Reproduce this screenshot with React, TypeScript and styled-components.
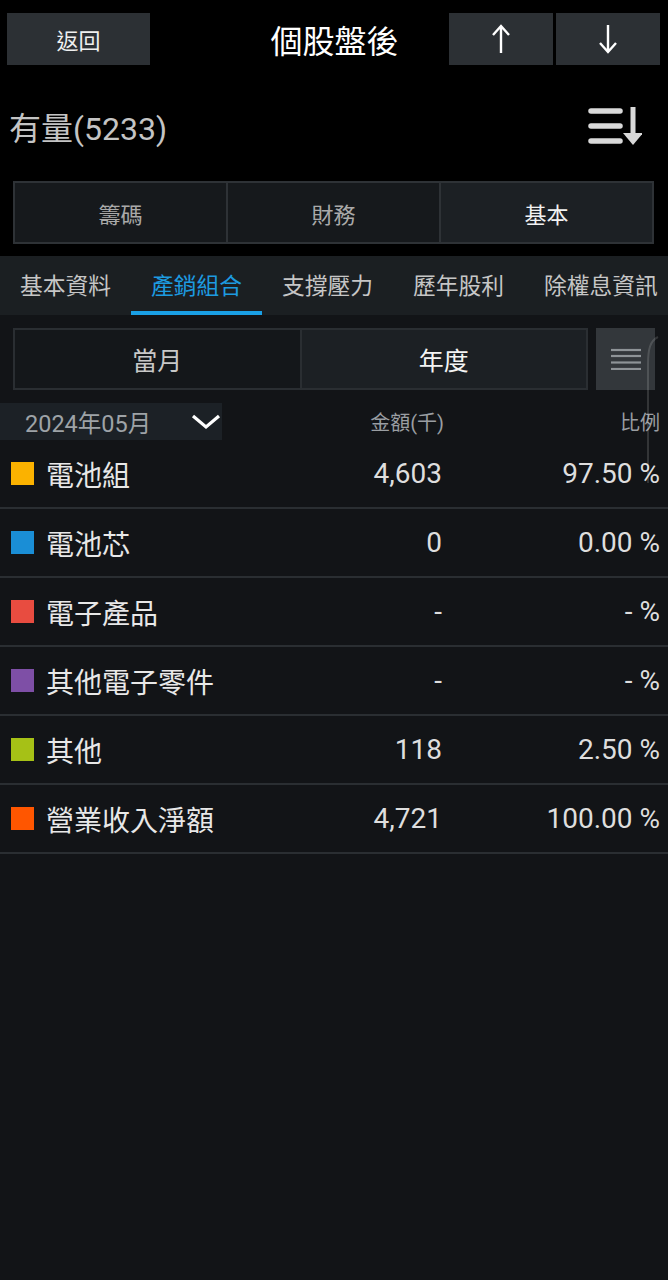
import React from "react";
import styled, { createGlobalStyle } from "styled-components";

const GlobalStyle = createGlobalStyle`
  body {
    margin: 0;
    background: #121417;
    font-family: Roboto, "Noto Sans CJK TC", sans-serif;
  }
`;

const tabs = ["基本資料", "產銷組合", "支撐壓力", "歷年股利", "除權息資訊"];

const rows = [
  { name: "電池組", color: "#fbb200", amount: "4,603", pct: "97.50 %" },
  { name: "電池芯", color: "#1a8ed6", amount: "0", pct: "0.00 %" },
  { name: "電子產品", color: "#e84c40", amount: "-", pct: "- %" },
  { name: "其他電子零件", color: "#7e4fa6", amount: "-", pct: "- %" },
  { name: "其他", color: "#a6c116", amount: "118", pct: "2.50 %" },
  { name: "營業收入淨額", color: "#ff5600", amount: "4,721", pct: "100.00 %" },
];

const Page = styled.div`
  width: 668px;
  min-height: 1280px;
  background: #121417;
  position: relative;
  overflow: hidden;
`;

const Header = styled.div`
  background: #000;
  padding: 13px 8px 12px 7px;
`;

const TopBar = styled.div`
  display: flex;
  align-items: stretch;
  height: 52px;
`;

const DarkButton = styled.div<{ $w: number }>`
  width: ${(p) => p.$w}px;
  background: #2c3034;
  color: #f0f0f0;
  font-size: 22px;
  display: flex;
  align-items: center;
  justify-content: center;
`;

const Title = styled.div`
  flex: 1;
  color: #fff;
  font-size: 32px;
  display: flex;
  align-items: center;
  justify-content: center;
  padding-left: 70px;
`;

const ArrowGroup = styled.div`
  display: flex;
  gap: 3px;
`;

const InfoRow = styled.div`
  height: 116px;
  display: flex;
  align-items: center;
  justify-content: space-between;
  padding: 6px 18px 0 2px;
  box-sizing: border-box;
`;

const StockName = styled.div`
  color: #c4c4c4;
  font-size: 32px;
`;

const Segment = styled.div`
  display: flex;
  margin: 0 6px;
  border: 2px solid #2e3236;
  background: #2e3236;
  gap: 2px;
  height: 63px;
  box-sizing: border-box;
`;

const SegCell = styled.div<{ $on?: boolean }>`
  flex: 1;
  background: ${(p) => (p.$on ? "#1c2024" : "#16191c")};
  color: ${(p) => (p.$on ? "#f2f2f2" : "#a9a9a9")};
  font-size: 22px;
  display: flex;
  align-items: center;
  justify-content: center;
`;

const TabBar = styled.div`
  background: #1b1f22;
  height: 59px;
  display: flex;
  white-space: nowrap;
  overflow: hidden;
`;

const Tab = styled.div<{ $on?: boolean }>`
  position: relative;
  flex: none;
  padding: 0 20px 2px;
  display: flex;
  align-items: center;
  font-size: 22.75px;
  color: ${(p) => (p.$on ? "#1d9be0" : "#c6c6c6")};

  &::after {
    content: "";
    display: ${(p) => (p.$on ? "block" : "none")};
    position: absolute;
    left: 0;
    right: 0;
    bottom: 0;
    height: 4px;
    background: #1aa0e6;
  }
`;

const Content = styled.div`
  position: relative;
`;

const PeriodBar = styled.div`
  display: flex;
  padding: 13px 13px 0 13px;
  gap: 8px;
  height: 62px;
`;

const PeriodSeg = styled.div`
  flex: 1;
  display: flex;
  border: 2px solid #2a2e32;
  background: #2a2e32;
  gap: 2px;
`;

const PeriodCell = styled.div<{ $on?: boolean }>`
  flex: 1;
  background: ${(p) => (p.$on ? "#1c2024" : "#14171a")};
  color: ${(p) => (p.$on ? "#f4f4f4" : "#c8c8c8")};
  font-size: 25px;
  display: flex;
  align-items: center;
  justify-content: center;
`;

const MenuButton = styled.div`
  width: 59px;
  background: #33373b;
  display: flex;
  align-items: center;
  justify-content: center;
`;

const ColHeader = styled.div`
  display: flex;
  align-items: center;
  margin-top: 13px;
  height: 37px;
  padding-right: 8px;
  color: #9a9ea2;
  font-size: 20px;
`;

const DateBox = styled.div`
  width: 222px;
  height: 37px;
  background: #1c2126;
  display: flex;
  align-items: center;
  justify-content: space-between;
  padding: 0 1px 0 25px;
  box-sizing: border-box;
  color: #9ea3a7;
  font-size: 23.5px;
`;

const HeadCol = styled.div<{ $w?: number }>`
  width: ${(p) => (p.$w ? `${p.$w}px` : "auto")};
  flex: ${(p) => (p.$w ? "none" : "1")};
  text-align: right;
`;

const Row = styled.div`
  display: flex;
  align-items: center;
  height: 67px;
  border-bottom: 2px solid #2a2e32;
  padding: 0 8px 0 11px;
`;

const Swatch = styled.div<{ $c: string }>`
  width: 23px;
  height: 23px;
  background: ${(p) => p.$c};
  margin-right: 12px;
  flex: none;
`;

const Label = styled.div`
  flex: 1;
  color: #e8e8e8;
  font-size: 28px;
`;

const Num = styled.div<{ $w: number }>`
  width: ${(p) => p.$w}px;
  text-align: right;
  color: #dedede;
  font-size: 28px;
`;

const Arc = styled.svg`
  position: absolute;
  right: 8px;
  top: 20px;
`;

const UpArrow = () => (
  <svg width="20" height="30" viewBox="0 0 20 30">
    <path d="M10 2 V29 M2 11 L10 2 L18 11" stroke="#fff" strokeWidth="2.4" fill="none" />
  </svg>
);

const DownArrow = () => (
  <svg width="20" height="30" viewBox="0 0 20 30">
    <path d="M10 1 V28 M2 19 L10 28 L18 19" stroke="#fff" strokeWidth="2.4" fill="none" />
  </svg>
);

const SortIcon = () => (
  <svg width="56" height="40" viewBox="0 0 56 40">
    <g stroke="#d9d9d9" strokeWidth="5.5" strokeLinecap="round">
      <line x1="5" y1="5" x2="34" y2="5" />
      <line x1="5" y1="20" x2="34" y2="20" />
      <line x1="5" y1="35" x2="34" y2="35" />
    </g>
    <rect x="44.5" y="1" width="5" height="28" fill="#d9d9d9" />
    <path d="M37 27 H57 L47 39 Z" fill="#d9d9d9" />
  </svg>
);

const MenuIcon = () => (
  <svg width="30" height="22" viewBox="0 0 30 22">
    <g stroke="#8e9397" strokeWidth="2.2">
      <line x1="0" y1="2" x2="30" y2="2" />
      <line x1="0" y1="8" x2="30" y2="8" />
      <line x1="0" y1="14.5" x2="30" y2="14.5" />
      <line x1="0" y1="21" x2="30" y2="21" />
    </g>
  </svg>
);

const Chevron = () => (
  <svg width="30" height="16" viewBox="0 0 30 16">
    <path d="M2 2 L15 13 L28 2" stroke="#fff" strokeWidth="3.2" fill="none" />
  </svg>
);

export default function App() {
  return (
    <Page>
      <GlobalStyle />
      <Header>
        <TopBar>
          <DarkButton $w={143}>返回</DarkButton>
          <Title>個股盤後</Title>
          <ArrowGroup>
            <DarkButton $w={104}>
              <UpArrow />
            </DarkButton>
            <DarkButton $w={104}>
              <DownArrow />
            </DarkButton>
          </ArrowGroup>
        </TopBar>
        <InfoRow>
          <StockName>有量(5233)</StockName>
          <SortIcon />
        </InfoRow>
        <Segment>
          <SegCell>籌碼</SegCell>
          <SegCell>財務</SegCell>
          <SegCell $on>基本</SegCell>
        </Segment>
      </Header>
      <TabBar>
        {tabs.map((t) => (
          <Tab key={t} $on={t === "產銷組合"}>
            {t}
          </Tab>
        ))}
      </TabBar>
      <Content>
        <PeriodBar>
          <PeriodSeg>
            <PeriodCell>當月</PeriodCell>
            <PeriodCell $on>年度</PeriodCell>
          </PeriodSeg>
          <MenuButton>
            <MenuIcon />
          </MenuButton>
        </PeriodBar>
        <ColHeader>
          <DateBox>
            2024年05月
            <Chevron />
          </DateBox>
          <HeadCol>金額(千)</HeadCol>
          <HeadCol $w={216}>比例</HeadCol>
        </ColHeader>
        {rows.map((r) => (
          <Row key={r.name}>
            <Swatch $c={r.color} />
            <Label>{r.name}</Label>
            <Num $w={150}>{r.amount}</Num>
            <Num $w={218}>{r.pct}</Num>
          </Row>
        ))}
        <Arc width="16" height="150" viewBox="0 0 16 150">
          <path d="M14 2 C6 6 4 14 4 30 V148" stroke="rgba(255,255,255,0.14)" strokeWidth="2" fill="none" />
        </Arc>
      </Content>
    </Page>
  );
}
